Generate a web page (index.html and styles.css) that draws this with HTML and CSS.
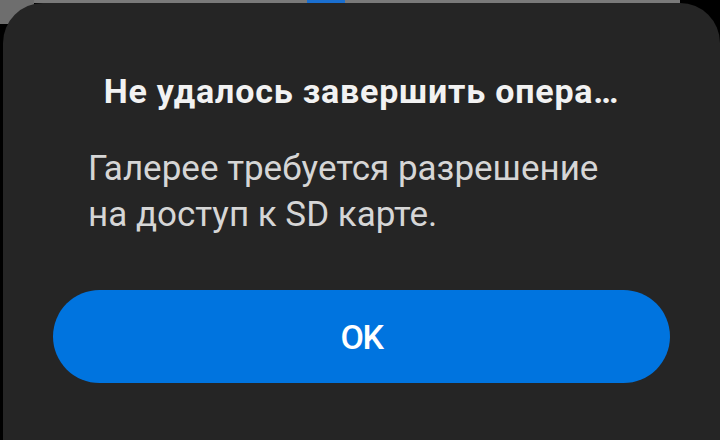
FILE: index.html
```html
<!DOCTYPE html>
<html>

<head>
  <meta charset="utf-8" />
  <title>Ошибка</title>
  <meta name="viewport" content="width=device-width, initial-scale=1" />
  <link rel="stylesheet" href="styles.css">
</head>

<body>
  <div class="pantalla">
    <!-- lo que queda detras del dialogo -->
    <div class="fondo-esquina"></div>
    <div class="barra-fondo">
      <div class="barra-gris"></div>
      <div class="barra-azul"></div>
      <div class="barra-gris corta"></div>
    </div>
    <div class="dialogo">
      <div class="titulo">Не удалось завершить опера…</div>
      <div class="mensaje">Галерее требуется разрешение<br>на доступ к SD карте.</div>
      <div class="acciones">
        <button class="boton">OK</button>
      </div>
    </div>
  </div>
</body>

</html>
```

FILE: styles.css
```css
html,
body {
  margin: 0;
  padding: 0;
  background: #000;
}

body {
  font-family: Roboto, "Noto Sans", sans-serif;
}

.pantalla {
  position: relative;
  width: 720px;
  height: 440px;
  overflow: hidden;
}

.fondo-esquina {
  position: absolute;
  top: 0;
  left: 0;
  width: 34px;
  height: 24px;
  background: #6e6e6e;
}

.barra-fondo {
  display: flex;
  height: 3px;
  margin-left: 30px;
  margin-right: 40px;
}

.barra-gris {
  width: 277px;
  background: #7a7a7a;
}

.barra-gris.corta {
  flex: 1;
}

.barra-azul {
  width: 38px;
  background: #1a6fd0;
}

.dialogo {
  position: relative;
  margin-left: 3px;
  height: 437px;
  background: #252525;
  border-radius: 40px 40px 0 0;
  display: flex;
  flex-direction: column;
}

.titulo {
  margin-top: 68px;
  text-align: center;
  color: #f2f2f2;
  font-size: 34px;
  font-weight: 700;
  letter-spacing: 0.8px;
  line-height: 40px;
}

.mensaje {
  margin-top: 35px;
  padding-left: 85px;
  color: #d6d6d6;
  font-size: 35px;
  line-height: 46px;
}

.acciones {
  padding: 0 50px 0 50px;
  margin-top: 52px;
}

.boton {
  width: 100%;
  height: 93px;
  border: none;
  border-radius: 47px;
  background: #0074df;
  color: #fff;
  font-family: Roboto, sans-serif;
  font-size: 34px;
  font-weight: 500;
  letter-spacing: -1.5px;
}
```
